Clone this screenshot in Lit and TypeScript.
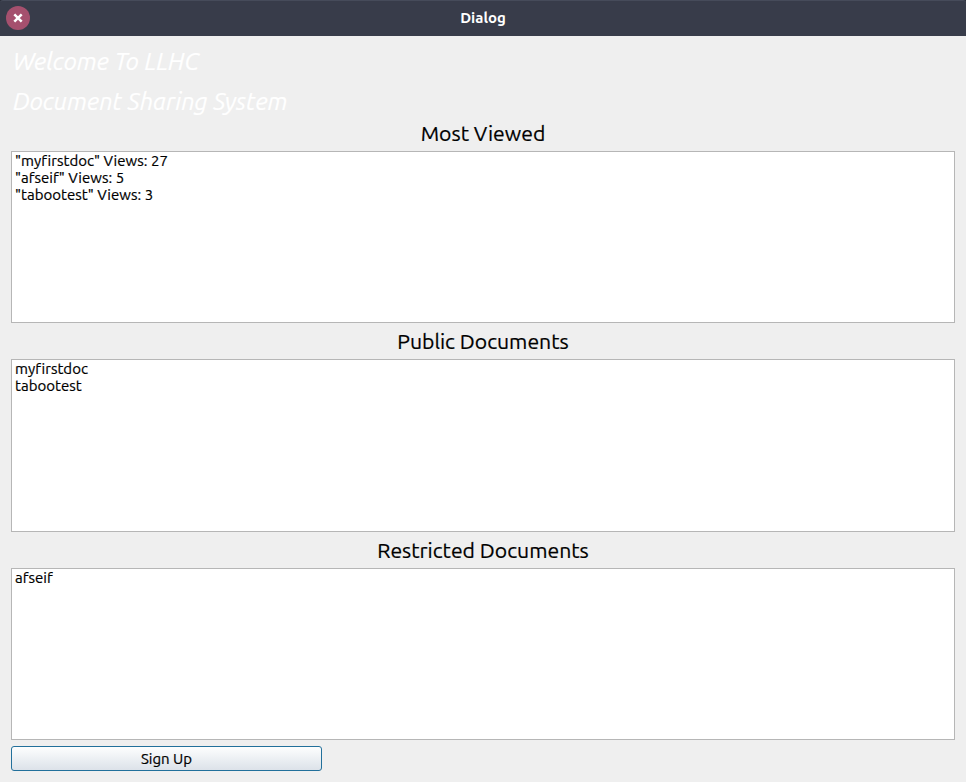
import { LitElement, html, css } from "lit";
import { customElement, property } from "lit/decorators.js";

@customElement("doc-list")
class DocList extends LitElement {
  @property() heading = "";
  @property({ attribute: false }) items: string[] = [];

  static styles = css`
    :host { display: flex; flex-direction: column; }
    .heading {
      height: 36px; line-height: 37px; text-align: center;
      font-size: 21.2px; color: #000; -webkit-text-stroke: 0.2px #000;
    }
    .box { flex: 1; box-sizing: border-box; border: 1px solid #b6b6b6; background: #fff; padding: 0 3px; }
    .row {
      height: 17px; line-height: 17px; font-size: 15px; white-space: pre; color: #000;
      font-variant-ligatures: none; letter-spacing: 0.03px; -webkit-text-stroke: 0.2px #000;
    }
  `;

  render() {
    return html`
      <div class="heading">${this.heading}</div>
      <div class="box">${this.items.map((i) => html`<div class="row"><span>${i}</span></div>`)}</div>
    `;
  }
}

@customElement("app-root")
class AppRoot extends LitElement {
  static styles = css`
    :host {
      display: flex; flex-direction: column; width: 966px; height: 782px; overflow: hidden;
      background: #efefef; font-family: Ubuntu, "Noto Sans", sans-serif;
    }
    .bar {
      height: 36px; box-sizing: border-box; background: #383c4a; border-top: 1px solid #464b5a;
      border-radius: 3px 3px 0 0; display: grid; grid-template-columns: 36px 1fr 36px; align-items: center;
    }
    .close { display: block; width: 24px; height: 24px; margin-left: 6px; margin-top: -1px; }
    .title { color: #fff; font-weight: 700; font-size: 15px; line-height: 32px; text-align: center; margin-top: -1px; }
    .frame { background: #2b2e39; }
    .body { flex: 1; display: flex; flex-direction: column; padding: 6px 11px 11px; }
    .banner {
      height: 40px; line-height: 40px; font-size: 24px; font-style: italic; color: #fff;
      padding-left: 2px; white-space: nowrap; -webkit-text-stroke: 0.2px #fff;
    }
    .first { height: 208px; margin-top: -7px; }
    .second { height: 209px; }
    .third { height: 208px; }
    .signup {
      width: 311px; height: 25px; margin-top: 6px; padding: 0; box-sizing: border-box;
      border: 1px solid #22709b; border-radius: 3px; background: linear-gradient(#fdfefe, #dce2e9);
      font: 15px/23px Ubuntu, "Noto Sans", sans-serif; color: #000; text-align: center;
      -webkit-text-stroke: 0.2px #000;
    }
  `;

  render() {
    return html`
      <div class="frame"><header class="bar">
        <svg class="close" viewBox="0 0 24 24">
          <circle cx="12" cy="12" r="12" fill="#a5506e" />
          <path d="M8.3 8.3L15.7 15.7M15.7 8.3L8.3 15.7" stroke="#fff" stroke-width="2.5" />
        </svg>
        <div class="title">Dialog</div>
      </header></div>
      <main class="body">
        <div class="banner"><span>Welcome To LLHC</span></div>
        <div class="banner"><span>Document Sharing System</span></div>
        <doc-list class="first" heading="Most Viewed"
          .items=${['"myfirstdoc" Views: 27', '"afseif" Views: 5', '"tabootest" Views: 3']}></doc-list>
        <doc-list class="second" heading="Public Documents" .items=${["myfirstdoc", "tabootest"]}></doc-list>
        <doc-list class="third" heading="Restricted Documents" .items=${["afseif"]}></doc-list>
        <button class="signup">Sign Up</button>
      </main>
    `;
  }
}
